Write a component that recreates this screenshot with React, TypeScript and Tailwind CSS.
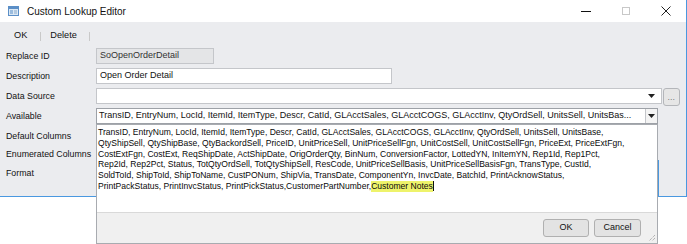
import React from "react";

const lines = [
  "TransID, EntryNum, LocId, ItemId, ItemType, Descr, CatId, GLAcctSales, GLAcctCOGS, GLAcctInv, QtyOrdSell, UnitsSell, UnitsBase,",
  "QtyShipSell, QtyShipBase, QtyBackordSell, PriceID, UnitPriceSell, UnitPriceSellFgn, UnitCostSell, UnitCostSellFgn, PriceExt, PriceExtFgn,",
  "CostExtFgn, CostExt, ReqShipDate, ActShipDate, OrigOrderQty, BinNum, ConversionFactor, LottedYN, InItemYN, Rep1Id, Rep1Pct,",
  "Rep2Id, Rep2Pct, Status, TotQtyOrdSell, TotQtyShipSell, ResCode, UnitPriceSellBasis, UnitPriceSellBasisFgn, TransType, CustId,",
  "SoldToId, ShipToId, ShipToName, CustPONum, ShipVia, TransDate, ComponentYn, InvcDate, BatchId, PrintAcknowStatus,",
];

function Arrow() {
  return (
    <svg width="7" height="4" viewBox="0 0 7 4">
      <path d="M0 0H7L3.5 4Z" fill="#222" />
    </svg>
  );
}

function Label({ text }: { text: string }) {
  return (
    <div className="pl-[6px] text-[8.8px] text-[#111] leading-none flex items-center">
      {text}
    </div>
  );
}

function App() {
  return (
    <div className="relative w-[687px] h-[244px] bg-white overflow-hidden font-['Liberation_Sans',Arial,sans-serif]">
      <div className="h-[197px] bg-[#ebecef] border-r border-b border-[#4a98e0] flex flex-col">
        {/* title bar */}
        <div className="h-[22px] bg-white flex items-center">
          <div className="pl-[8px] pr-[8px]">
            <svg width="11" height="10" viewBox="0 0 11 10">
              <rect x="0.5" y="0.5" width="10" height="9" fill="#dce9f5" stroke="#5b8fc7" />
              <rect x="1" y="1" width="9" height="2" fill="#5b8fc7" />
              <rect x="2" y="4.5" width="3" height="1" fill="#5b8fc7" />
              <rect x="6" y="4.5" width="3" height="1" fill="#8aa9c9" />
              <rect x="2" y="6.5" width="3" height="1" fill="#5b8fc7" />
              <rect x="6" y="6.5" width="3" height="1" fill="#8aa9c9" />
            </svg>
          </div>
          <span className="text-[10px] text-[#111]">Custom Lookup Editor</span>
          <div className="ml-auto flex h-full">
            <div className="w-[40px] flex items-center justify-center">
              <div className="w-[10px] h-px bg-[#111]" />
            </div>
            <div className="w-[40px] flex items-center justify-center">
              <div className="w-[8px] h-[8px] border border-[#c8c8c8]" />
            </div>
            <div className="w-[40px] flex items-center justify-center">
              <svg width="10" height="10" viewBox="0 0 10 10">
                <path d="M0.5 0.5L9.5 9.5M9.5 0.5L0.5 9.5" stroke="#222" strokeWidth="1" />
              </svg>
            </div>
          </div>
        </div>

        {/* toolbar */}
        <div className="h-[26px] pt-[2px] flex items-center text-[9.2px] text-[#111]">
          <span className="ml-[14px]">OK</span>
          <div className="ml-[13px] w-px h-[9px] bg-[#c9c9c9]" />
          <span className="ml-[9px]">Delete</span>
          <div className="ml-[12px] w-px h-[9px] bg-[#c9c9c9]" />
        </div>

        {/* form */}
        <div className="grid grid-cols-[96px_1fr] gap-y-[4px] auto-rows-[16px]">
          <Label text="Replace ID" />
          <div className="w-[118px] h-[16px] bg-[#e4e5e7] border border-[#c4c6ca] flex items-center pl-[3px] text-[9px] text-[#333]">
            SoOpenOrderDetail
          </div>

          <Label text="Description" />
          <div className="w-[296px] h-[16px] bg-white border border-[#c4c6ca] flex items-center pl-[3px] text-[9px] text-[#111]">
            Open Order Detail
          </div>

          <Label text="Data Source" />
          <div className="flex items-start">
            <div className="w-[566px] h-[16px] bg-white border border-[#c4c6ca] flex items-center justify-end pr-[6px]">
              <Arrow />
            </div>
            <div className="ml-[1px] w-[17px] h-[18px] bg-[#e6e6e6] border border-[#b4b6ba] rounded-[3px] flex items-end justify-center pb-[4px]">
              <span className="text-[7px] leading-none text-[#333] tracking-[0.5px]">...</span>
            </div>
          </div>

          <Label text="Available" />
          <div className="w-[562px] h-[16px] bg-white border border-[#9da1a7] flex items-center">
            <span className="pl-[2px] text-[9px] text-[#111] whitespace-nowrap overflow-hidden flex-1">
              TransID, EntryNum, LocId, ItemId, ItemType, Descr, CatId, GLAcctSales, GLAcctCOGS, GLAcctInv, QtyOrdSell, UnitsSell, UnitsBas...
            </span>
            <div className="w-[12px] h-full border-l border-[#c4c6ca] bg-[#f4f4f4] flex items-center justify-center">
              <Arrow />
            </div>
          </div>

          <Label text="Default Columns" />
          <div />
          <div className="mt-[2px]">
            <Label text="Enumerated Columns" />
          </div>
          <div />
          <div className="mt-[1px]">
            <Label text="Format" />
          </div>
          <div />
        </div>
      </div>

      {/* dropdown editor popup */}
      <div className="absolute left-[96px] top-[124px] w-[562px] h-[120px] border border-[#a8abb0] flex flex-col">
        <div className="flex-1 bg-white border-b border-[#d9d9d9] pl-[1px] pt-[2px] text-[8.55px] leading-[10.8px] text-[#0a0a0a]">
          {lines.map((l) => (
            <div key={l} className="whitespace-nowrap">
              {l}
            </div>
          ))}
          <div className="whitespace-nowrap flex">
            <span>PrintPackStatus, PrintInvcStatus, PrintPickStatus,CustomerPartNumber,</span>
            <span className="bg-[#eef36b]">Customer Notes</span>
            <span className="w-px h-[10px] bg-[#111]" />
          </div>
        </div>
        <div className="relative h-[30px] bg-[#f0f0f0] flex items-center justify-end gap-[5px] pr-[16px]">
          <div className="w-[46px] h-[18px] rounded-[3px] border border-[#b0b0b0] bg-[#e3e3e3] flex items-center justify-center text-[9px] text-[#111]">
            OK
          </div>
          <div className="w-[47px] h-[18px] rounded-[3px] border border-[#b0b0b0] bg-[#e3e3e3] flex items-center justify-center text-[9px] text-[#111]">
            Cancel
          </div>
          <svg className="absolute right-[1px] bottom-[1px]" width="9" height="9" viewBox="0 0 9 9">
            <path d="M8 2L2 8M8 5L5 8" stroke="#9a9a9a" strokeWidth="1" strokeDasharray="1 1" />
          </svg>
        </div>
      </div>

      <div className="absolute left-[658px] top-[160px] w-px h-[37px] bg-[#4a98e0]" />
    </div>
  );
}

export default App;
